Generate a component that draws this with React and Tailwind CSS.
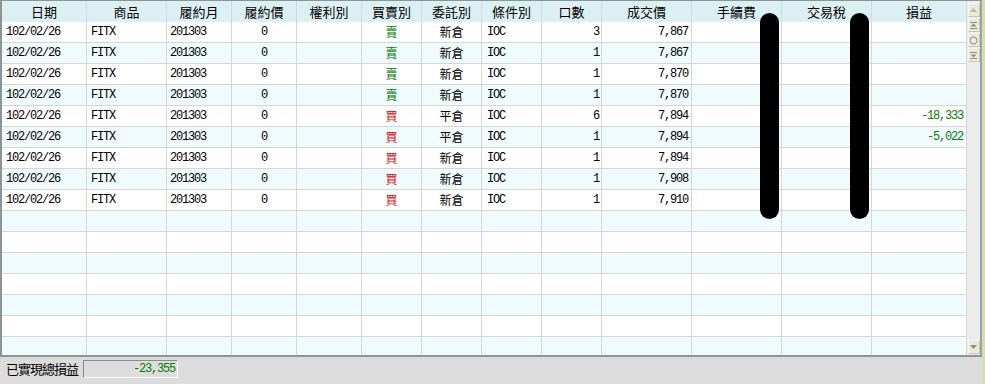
import React from "react";

const cols = [
  { title: "日期", w: "w-[85px]", align: "text-left pl-[4px]" },
  { title: "商品", w: "w-[80px]", align: "text-left pl-[4px]" },
  { title: "履約月", w: "w-[65px]", align: "text-left pl-[3px]" },
  { title: "履約價", w: "w-[65px]", align: "text-center" },
  { title: "權利別", w: "w-[65px]", align: "text-center" },
  { title: "買賣別", w: "w-[60px]", align: "text-center" },
  { title: "委託別", w: "w-[60px]", align: "text-center" },
  { title: "條件別", w: "w-[60px]", align: "text-left pl-[5px]" },
  { title: "口數", w: "w-[60px]", align: "text-right pr-[2px]" },
  { title: "成交價", w: "w-[90px]", align: "text-right pr-[3px]" },
  { title: "手續費", w: "w-[90px]", align: "text-right pr-[3px]" },
  { title: "交易稅", w: "w-[90px]", align: "text-right pr-[3px]" },
  { title: "損益", w: "w-[95px]", align: "text-right pr-[3px]" },
];

const trades = [
  ["賣", "新倉", "3", "7,867", ""],
  ["賣", "新倉", "1", "7,867", ""],
  ["賣", "新倉", "1", "7,870", ""],
  ["賣", "新倉", "1", "7,870", ""],
  ["買", "平倉", "6", "7,894", "-18,333"],
  ["買", "平倉", "1", "7,894", "-5,022"],
  ["買", "新倉", "1", "7,894", ""],
  ["買", "新倉", "1", "7,908", ""],
  ["買", "新倉", "1", "7,910", ""],
];

const rows = Array.from({ length: 16 }, (_, i) => {
  const t = trades[i];
  if (!t) return Array(13).fill("");
  return ["102/02/26", "FITX", "201303", "0", "", t[0], t[1], "IOC", t[2], t[3], "", "", t[4]];
});

const mono = "font-['Liberation_Mono',monospace] text-[12px] tracking-[-1.2px]";
const cjk = "font-['Noto_Sans_CJK_TC',sans-serif] text-[12px]";

function cellColor(ci, v) {
  if (ci === 5) return v === "賣" ? "text-[#008000]" : "text-[#e00000]";
  if (ci === 12) return "text-[#008000]";
  return "text-black";
}

function ScrollButton({ children, className = "" }) {
  return (
    <div
      className={
        "w-[12px] h-[14px] flex items-center justify-center bg-[#ebe9dc] border border-t-[#f7f6ef] border-l-[#f7f6ef] border-r-[#c9c6b6] border-b-[#c9c6b6] " +
        className
      }
    >
      {children}
    </div>
  );
}

export default function App() {
  return (
    <div className="w-[985px] h-[384px] flex flex-col bg-[#dcdcdc] border-r-[3px] border-[#d3dfb2] overflow-hidden">
      <div className="h-[357px] shrink-0 flex border-t border-l-2 border-b-2 border-[#8a9696] bg-white">
        <div className="relative flex-1 flex flex-col overflow-hidden">
          <div className="flex h-[21px] shrink-0 bg-[#dcf0f4]">
            {cols.map((c) => (
              <div
                key={c.title}
                className={`${c.w} shrink-0 h-full flex items-center justify-center border-r border-[#c9dde2] font-['Noto_Sans_CJK_TC',sans-serif] text-[13px] text-black`}
              >
                {c.title}
              </div>
            ))}
          </div>
          {rows.map((r, ri) => (
            <div
              key={ri}
              className={`flex h-[21px] shrink-0 border-b border-[#d6d6d6] ${
                ri % 2 === 0 ? "bg-white" : "bg-[#f0fbfd]"
              }`}
            >
              {r.map((v, ci) => (
                <div
                  key={ci}
                  className={`${cols[ci].w} shrink-0 h-full leading-[20px] border-r border-[#d6d6d6] whitespace-nowrap overflow-hidden ${cols[ci].align} ${
                    ci === 5 || ci === 6 ? cjk : mono
                  } ${cellColor(ci, v)}`}
                >
                  {v}
                </div>
              ))}
            </div>
          ))}
          <div className="absolute left-[758px] top-[12px] w-[19px] h-[206px] rounded-full bg-black" />
          <div className="absolute left-[848px] top-[12px] w-[19px] h-[206px] rounded-full bg-black" />
        </div>
        <div className="w-[13px] shrink-0 flex flex-col items-center bg-[#ececec] pt-[2px] gap-[1px]">
          <ScrollButton>
            <svg width="9" height="6" viewBox="0 0 9 6">
              <path d="M4.5 1 L8 5 L1 5 Z" fill="#b9b7a8" />
            </svg>
          </ScrollButton>
          <ScrollButton>
            <svg width="9" height="9" viewBox="0 0 9 9">
              <path d="M1 1.5 H8" stroke="#8f8d80" strokeWidth="1" />
              <path d="M4.5 2.5 L7.5 5.5 L1.5 5.5 Z" fill="#8f8d80" />
              <path d="M1 7.5 H8" stroke="#8f8d80" strokeWidth="1" />
            </svg>
          </ScrollButton>
          <ScrollButton>
            <svg width="9" height="9" viewBox="0 0 9 9">
              <circle cx="4.5" cy="4.5" r="3.5" fill="none" stroke="#8f8d80" strokeWidth="1" />
            </svg>
          </ScrollButton>
          <ScrollButton>
            <svg width="9" height="9" viewBox="0 0 9 9">
              <path d="M1 1.5 H8" stroke="#8f8d80" strokeWidth="1" />
              <path d="M1.5 3.5 L7.5 3.5 L4.5 6.5 Z" fill="#8f8d80" />
              <path d="M1 7.5 H8" stroke="#8f8d80" strokeWidth="1" />
            </svg>
          </ScrollButton>
          <div className="flex-1" />
          <ScrollButton className="mb-[1px]">
            <svg width="9" height="6" viewBox="0 0 9 6">
              <path d="M1 1 L8 1 L4.5 5 Z" fill="#8f8d80" />
            </svg>
          </ScrollButton>
        </div>
        <div className="w-[2px] shrink-0 bg-[#9aa4a4]" />
      </div>
      <div className="flex-1 flex items-start pt-[3px] pl-[6px]">
        <span className="w-[77px] h-[18px] leading-[18px] whitespace-nowrap font-['Noto_Sans_CJK_TC',sans-serif] text-[13px] tracking-[-1px] text-black">
          已實現總損益
        </span>
        <div className="w-[95px] h-[18px] border border-t-[#8a8a8a] border-l-[#8a8a8a] border-r-white border-b-white bg-[#dddddd] text-right pr-[2px] leading-[16px] font-['Liberation_Mono',monospace] text-[12px] tracking-[-1.2px] text-[#008000]">
          -23,355
        </div>
      </div>
    </div>
  );
}
